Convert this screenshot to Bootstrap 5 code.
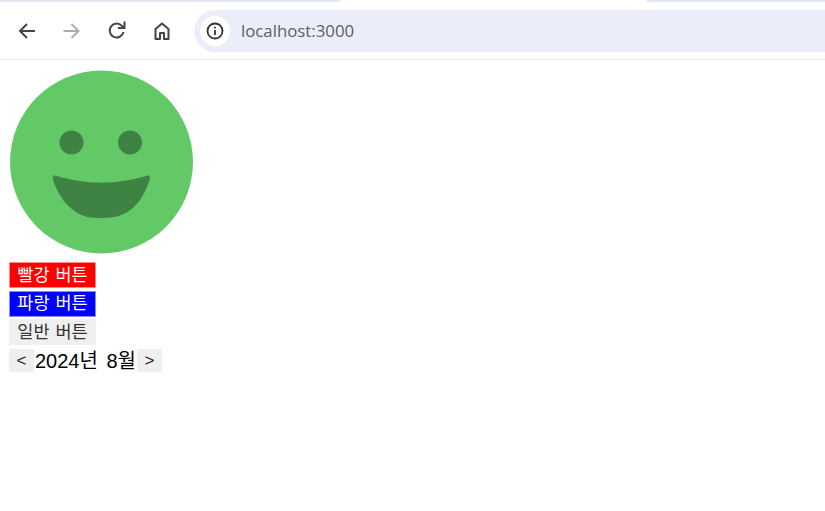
<!DOCTYPE html>
<html lang="ko">
<head>
<meta charset="utf-8">
<title>localhost:3000</title>
<link href="https://cdn.jsdelivr.net/npm/bootstrap@5.3.0/dist/css/bootstrap.min.css" rel="stylesheet">
<script src="https://cdn.jsdelivr.net/npm/bootstrap@5.3.0/dist/js/bootstrap.bundle.min.js"></script>
<style>
html,body{height:100%;overflow:hidden;background:#fff}
body{font-family:"Liberation Sans","Noto Sans CJK KR",sans-serif}
.tabstrip{height:2px;display:flex;justify-content:space-between;background:#fff}
.tabstrip span{display:block;height:2px;background:#e3e8f2}
.tabstrip .st-left{width:340px}
.tabstrip .st-right{width:178px}
.chrome-bar{height:58px;border-bottom:1px solid #e9e9e9;padding:8px 0 8px 10px}
.nav-ico{width:34px;height:34px;margin-right:11px;flex:none}
.nav-ico:nth-child(4){margin-right:15px}
.omni{flex:1;height:42px;background:#ebeef8;border-radius:21px 0 0 21px;padding-left:6px;gap:11px;
  font:16.8px "Open Sans","Liberation Sans",sans-serif;color:#5a5c68}
.info-disc{width:30px;height:30px;background:#fff;border-radius:50%}
.page-body{padding:10px 0 0 9px}
.face{width:184px;height:184px;display:block;margin-bottom:8px}
.tbtn{border:1px solid #f0f0f0;background:#efefef;color:#333;font-size:17.5px;line-height:23px;height:26px;width:87px;padding:0;margin-bottom:2.5px;text-align:center;border-radius:0;word-spacing:1px}
.tbtn.t-red{background:#f00;color:#fff;border-color:#ff8a8a}
.tbtn.t-blue{background:#00f;color:#fff;border-color:#8a8aff}
.cal-row{font-size:20px;line-height:24px;color:#000;margin-top:1px;word-spacing:3px}
.cal-btn{border:0;background:#efefef;color:#222;width:25px;height:23px;padding:0;font:17px/23px "Liberation Sans",sans-serif;border-radius:0}
.cal-text{margin-left:1px;margin-right:1px}
</style>
</head>
<body>
<div class="tabstrip"><span class="st-left"></span><span class="st-right"></span></div>
<div class="chrome-bar d-flex align-items-center">
  <svg class="nav-ico" viewBox="0 0 34 34" fill="none" stroke="#454545" stroke-width="2"><path d="M25 17H10M17 10l-7 7 7 7"/></svg>
  <svg class="nav-ico" viewBox="0 0 34 34" fill="none" stroke="#adadad" stroke-width="2"><path d="M8.500 17h15M16.500 10l7 7-7 7"/></svg>
  <svg class="nav-ico" viewBox="0 0 34 34" fill="none" stroke="#454545" stroke-width="2"><path d="M23.500 18a7 7 0 1 1-1.600-6.200L24 14"/><path d="M24.500 7.500V14H18"/></svg>
  <svg class="nav-ico" viewBox="0 0 34 34" fill="none" stroke="#454545" stroke-width="2" stroke-linejoin="round"><path d="M10.500 25V15l6.500-5.500 6.500 5.500V25h-4.500v-6h-4v6z"/></svg>
  <div class="omni d-flex align-items-center">
    <span class="info-disc d-flex align-items-center justify-content-center">
      <svg width="18" height="18" viewBox="0 0 18 18" fill="none" stroke="#333" stroke-width="1.800"><circle cx="9" cy="9" r="7.500"/><path d="M9 8v5"/><path d="M9 4.800v1.800"/></svg>
    </span>
    <span>localhost:3000</span>
  </div>
</div>
<main class="page-body d-flex flex-column align-items-start">
  <svg class="face" viewBox="0 0 184 184">
    <circle cx="92.500" cy="92" r="91.500" fill="#63c967"/>
    <circle cx="62.500" cy="72.500" r="12" fill="#3e8244"/>
    <circle cx="121" cy="72.500" r="12" fill="#3e8244"/>
    <path d="M46.500 105.500C75 115 110 115 138 105.500C140.500 105 141.500 107 141 109C133 133 120 148 95 148H88C65 148 51 130 44 110C43 107 44 105 46.500 105.500z" fill="#3e8244"/>
  </svg>
  <button type="button" class="tbtn t-red">빨강 버튼</button>
  <button type="button" class="tbtn t-blue">파랑 버튼</button>
  <button type="button" class="tbtn">일반 버튼</button>
  <div class="cal-row d-flex align-items-center">
    <button type="button" class="cal-btn">&lt;</button><span class="cal-text">2024년 8월</span><button type="button" class="cal-btn">&gt;</button>
  </div>
</main>
</body>
</html>
